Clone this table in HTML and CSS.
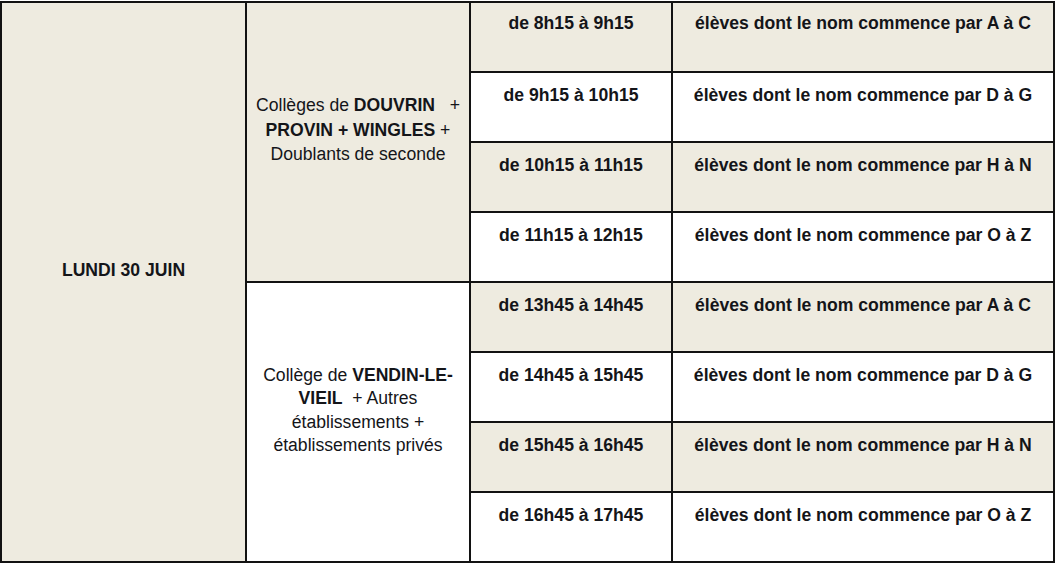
FILE: index.html
```html
<!DOCTYPE html>
<html lang="fr">
<head>
<meta charset="utf-8">
<title>Planning</title>
<link rel="stylesheet" href="styles.css">
</head>
<body>
<div class="grid">
  <div class="cell day beige"><b>LUNDI 30 JUIN</b></div>
  <div class="cell group g1 beige"><p>Collèges de <b>DOUVRIN</b>&nbsp;&nbsp; +<br><b>PROVIN + WINGLES</b> +<br>Doublants de seconde</p></div>

  <div class="cell slot first beige"><b>de 8h15 à 9h15</b></div>
  <div class="cell slot first beige"><b>élèves dont le nom commence par A à C</b></div>
  <div class="cell slot"><b>de 9h15 à 10h15</b></div>
  <div class="cell slot"><b>élèves dont le nom commence par D à G</b></div>
  <div class="cell slot beige"><b>de 10h15 à 11h15</b></div>
  <div class="cell slot beige"><b>élèves dont le nom commence par H à N</b></div>
  <div class="cell slot"><b>de 11h15 à 12h15</b></div>
  <div class="cell slot"><b>élèves dont le nom commence par O à Z</b></div>

  <div class="cell group g2"><p>Collège de <b>VENDIN-LE-</b><br><b>VIEIL</b>&nbsp; + Autres<br>établissements +<br>établissements privés</p></div>

  <div class="cell slot beige"><b>de 13h45 à 14h45</b></div>
  <div class="cell slot beige"><b>élèves dont le nom commence par A à C</b></div>
  <div class="cell slot"><b>de 14h45 à 15h45</b></div>
  <div class="cell slot"><b>élèves dont le nom commence par D à G</b></div>
  <div class="cell slot beige"><b>de 15h45 à 16h45</b></div>
  <div class="cell slot beige"><b>élèves dont le nom commence par H à N</b></div>
  <div class="cell slot"><b>de 16h45 à 17h45</b></div>
  <div class="cell slot"><b>élèves dont le nom commence par O à Z</b></div>
</div>
</body>
</html>
```
FILE: styles.css
```css
html, body {
  margin: 0;
  padding: 0;
  background: #ffffff;
}

body {
  font-family: "Liberation Sans", Arial, sans-serif;
  font-size: 17.6px;
  color: #141519;
}

.grid {
  margin-top: 1px;
  width: 1051px;
  display: grid;
  grid-template-columns: 243px 222px 200px 380px;
  grid-template-rows: repeat(8, 68.05px);
  gap: 2px;
  padding: 2px;
  background: #121212;
}

.cell {
  background: #ffffff;
  text-align: center;
  line-height: 24px;
}

.beige {
  background: #eeebe0;
}

.day {
  grid-column: 1;
  grid-row: 1 / 9;
  display: flex;
  align-items: center;
  justify-content: center;
  padding-bottom: 24px;
}

.group {
  grid-column: 2;
  display: flex;
  align-items: center;
  justify-content: center;
  padding-bottom: 24px;
}

.group p {
  margin: 0;
}

.g1 {
  grid-row: 1 / 5;
  line-height: 24.5px;
}

.g2 {
  grid-row: 5 / 9;
  line-height: 23.3px;
  padding-bottom: 23px;
}

.slot {
  padding-top: 9.5px;
}

.slot.first {
  padding-top: 8px;
}
```
